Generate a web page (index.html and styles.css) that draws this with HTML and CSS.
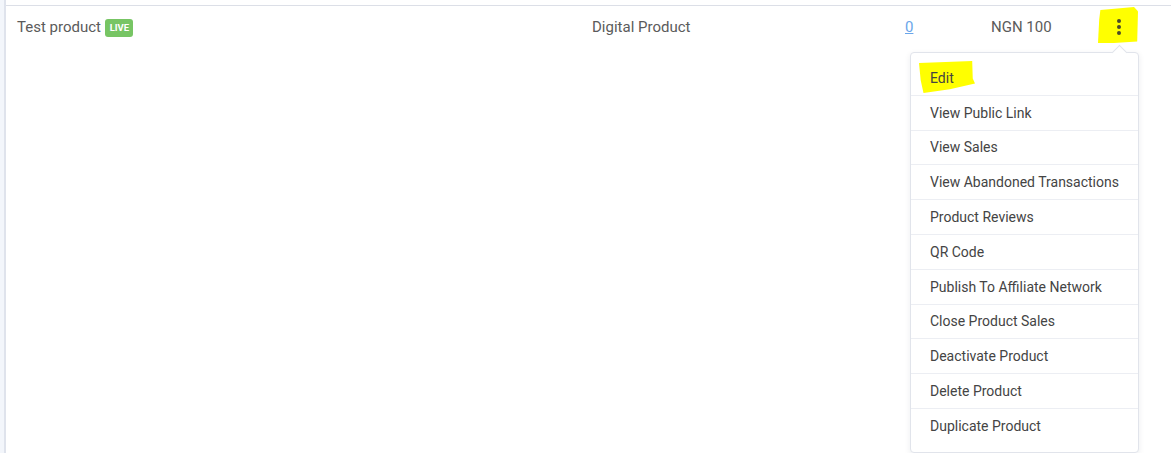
FILE: index.html
```html
<!DOCTYPE html>
<html>
<head>
  <title>Products</title>
  <link rel="stylesheet" href="styles.css">
</head>
<body>
<div class="page">
  <div class="table">
    <div class="row">
      <div class="cell name">Test product <span class="badge">LIVE</span></div>
      <div class="cell type">Digital Product</div>
      <div class="cell sales"><a href="#" class="sales-link">0</a></div>
      <div class="cell price">NGN 100</div>
      <div class="cell actions">
        <span class="mark mark-kebab"></span>
        <button class="kebab" aria-label="Actions">
          <span class="dot"></span><span class="dot"></span><span class="dot"></span>
        </button>
        <div class="menu">
          <span class="caret"></span>
          <span class="mark mark-edit"></span>
          <a href="#" class="menu-item">Edit</a>
          <a href="#" class="menu-item">View Public Link</a>
          <a href="#" class="menu-item">View Sales</a>
          <a href="#" class="menu-item">View Abandoned Transactions</a>
          <a href="#" class="menu-item">Product Reviews</a>
          <a href="#" class="menu-item">QR Code</a>
          <a href="#" class="menu-item">Publish To Affiliate Network</a>
          <a href="#" class="menu-item">Close Product Sales</a>
          <a href="#" class="menu-item">Deactivate Product</a>
          <a href="#" class="menu-item">Delete Product</a>
          <a href="#" class="menu-item">Duplicate Product</a>
        </div>
      </div>
    </div>
  </div>
</div>
</body>
</html>
```

FILE: styles.css
```css
html, body {
  margin: 0;
  padding: 0;
  width: 100%;
  height: 100%;
  background: #fff;
  font-family: Roboto, "Liberation Sans", sans-serif;
  overflow: hidden;
}

.page {
  height: 100%;
  padding-left: 4px;
  background: #f3f6fb;
}

.table {
  height: 100%;
  background: #fff;
  border-left: 2px solid #dfe3ec;
  padding-top: 5px;
  box-sizing: border-box;
}

.row {
  display: grid;
  grid-template-columns: 575px 313px 86px 110px 1fr;
  border-top: 1px solid #dcdfe7;
  height: 42px;
  align-items: center;
  color: #5b5b5b;
  font-size: 15px;
}

.cell {
  padding-left: 11px;
}

.badge {
  display: inline-block;
  background: #77c564;
  color: #fff;
  font-size: 9.5px;
  font-weight: 700;
  line-height: 18px;
  height: 18px;
  padding: 0 4px 0 5px;
  border-radius: 3px;
  vertical-align: 1px;
  margin-left: 0;
}

.sales-link {
  color: #6aa6ea;
  text-decoration: underline;
}

.actions {
  position: relative;
  height: 100%;
  padding-left: 0;
}

.kebab {
  position: absolute;
  left: 17px;
  top: 0;
  width: 24px;
  height: 42px;
  border: 0;
  background: transparent;
  padding: 0;
  display: flex;
  flex-direction: column;
  align-items: center;
  justify-content: center;
  gap: 2px;
}

.dot {
  width: 4px;
  height: 4px;
  border-radius: 50%;
  background: #4a4a2a;
}

.mark {
  position: absolute;
  background: #ffff00;
}

.mark-kebab {
  left: 8px;
  top: 1px;
  width: 40px;
  height: 36px;
  clip-path: polygon(6% 8%, 90% 0, 100% 12%, 98% 96%, 40% 100%, 0 100%, 3% 35%);
}

.menu {
  position: absolute;
  left: -180px;
  top: 46px;
  width: 227px;
  background: #fff;
  border: 1px solid #e1e4eb;
  border-radius: 4px;
  box-shadow: 0 2px 6px rgba(30, 40, 60, 0.08);
  padding: 8px 0;
  display: flex;
  flex-direction: column;
  z-index: 2;
}

.caret {
  position: absolute;
  right: 13px;
  top: -6px;
  width: 10px;
  height: 10px;
  background: #fff;
  border-left: 1px solid #e1e4eb;
  border-top: 1px solid #e1e4eb;
  transform: rotate(45deg);
}

.mark-edit {
  left: 8px;
  top: 8px;
  width: 56px;
  height: 32px;
  clip-path: polygon(0 6%, 95% 0, 96% 55%, 100% 70%, 55% 88%, 8% 100%, 3% 60%);
}

.menu-item {
  position: relative;
  height: 34.8px;
  display: flex;
  align-items: center;
  padding-left: 19px;
  color: #444;
  font-size: 14px;
  text-decoration: none;
  border-bottom: 1px solid #eceef3;
  box-sizing: border-box;
}

.menu-item:last-child {
  border-bottom: 0;
}
```
